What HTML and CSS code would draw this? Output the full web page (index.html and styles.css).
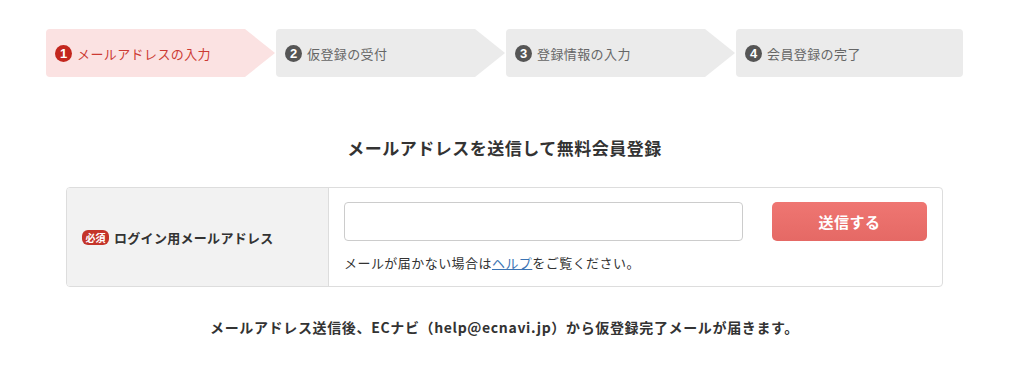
FILE: index.html
```html
<!DOCTYPE html>
<html lang="ja">
<head>
    <meta charset="UTF-8">
    <meta name="viewport" content="width=device-width, initial-scale=1.0">
    <title>ECナビ - 無料会員登録</title>
    <link rel="stylesheet" href="styles.css">
</head>
<body>

<div class="page">
    <ol class="steps">
        <li class="step current"><span class="num">1</span>メールアドレスの入力</li>
        <li class="step"><span class="num">2</span>仮登録の受付</li>
        <li class="step"><span class="num">3</span>登録情報の入力</li>
        <li class="step last"><span class="num">4</span>会員登録の完了</li>
    </ol>

    <h2 class="title">メールアドレスを送信して無料会員登録</h2>

    <form class="entry" onsubmit="return false;">
        <div class="entry-label">
            <span class="badge">必須</span>ログイン用メールアドレス
        </div>
        <div class="entry-field">
            <div class="field-row">
                <input type="email" class="mail-input">
                <button type="submit" class="send-btn">送信する</button>
            </div>
            <p class="help">メールが届かない場合は<a href="#">ヘルプ</a>をご覧ください。</p>
        </div>
    </form>

    <p class="notice">メールアドレス送信後、ECナビ（help@ecnavi.jp）から仮登録完了メールが届きます。</p>
</div>

</body>
</html>
```

FILE: styles.css
```css
body {
    margin: 0;
    background: #fff;
    color: #333;
    font-family: "Noto Sans CJK JP", "Noto Sans", sans-serif;
}
.page {
    width: 1009px;
    padding-top: 29px;
}
.steps {
    display: flex;
    width: 917px;
    margin: 0 auto;
    padding: 0;
    list-style: none;
}
.step {
    position: relative;
    display: flex;
    align-items: center;
    width: 190px;
    height: 48px;
    padding-left: 9px;
    margin-right: 31px;
    background: #ebebeb;
    color: #666;
    font-size: 13px;
    letter-spacing: 0.4px;
    border-radius: 4px 0 0 4px;
}
.step::after {
    content: "";
    position: absolute;
    left: 100%;
    top: 0;
    border-left: 30px solid #ebebeb;
    border-top: 24px solid transparent;
    border-bottom: 24px solid transparent;
}
.step.last {
    flex: 1;
    margin-right: 0;
    border-radius: 4px;
}
.step.last::after {
    display: none;
}
.step.current {
    background: #fbe2e2;
    color: #cc3a33;
}
.step.current::after {
    border-left-color: #fbe2e2;
}
.num {
    display: inline-flex;
    flex: none;
    align-items: center;
    justify-content: center;
    width: 17px;
    height: 17px;
    margin-right: 5px;
    border-radius: 50%;
    background: #555;
    color: #fff;
    font-family: "Liberation Sans", Arial, sans-serif;
    font-size: 13px;
    font-weight: bold;
    letter-spacing: 0;
}
.step.current .num {
    background: #c3271e;
}
.title {
    margin: 59px 0 0;
    text-align: center;
    font-size: 17px;
    line-height: 24px;
    letter-spacing: 0.5px;
    font-weight: bold;
    color: #333;
}
.entry {
    display: flex;
    width: 875px;
    margin: 27px auto 0;
    border: 1px solid #ddd;
    border-radius: 4px;
    overflow: hidden;
}
.entry-label {
    display: flex;
    align-items: center;
    width: 247px;
    padding-left: 15px;
    background: #f2f2f2;
    border-right: 1px solid #ddd;
    font-size: 13px;
    font-weight: bold;
    letter-spacing: 0.3px;
    color: #333;
}
.badge {
    display: inline-block;
    width: 27px;
    height: 15px;
    line-height: 15px;
    margin-right: 5px;
    border-radius: 6px;
    background: #c4342a;
    color: #fff;
    font-size: 10px;
    text-align: center;
    letter-spacing: 0;
}
.entry-field {
    flex: 1;
    padding: 14px 15px 13px 15px;
}
.field-row {
    display: flex;
    gap: 29px;
}
.mail-input {
    box-sizing: border-box;
    width: 399px;
    height: 39px;
    border: 1px solid #ccc;
    border-radius: 4px;
    background: #fff;
}
.send-btn {
    width: 155px;
    height: 39px;
    border: none;
    border-radius: 5px;
    background: linear-gradient(#ef7672, #e56965);
    color: #fff;
    font-family: inherit;
    font-size: 15px;
    font-weight: bold;
    letter-spacing: 0.5px;
    cursor: pointer;
}
.help {
    margin: 12px 0 0;
    font-size: 13px;
    line-height: 20px;
    letter-spacing: 0.45px;
    color: #333;
}
.help a {
    color: #3b73b3;
}
.notice {
    margin: 30px 0 0;
    text-align: center;
    font-size: 14px;
    line-height: 20px;
    letter-spacing: 0.65px;
    font-weight: bold;
    color: #333;
}
```
